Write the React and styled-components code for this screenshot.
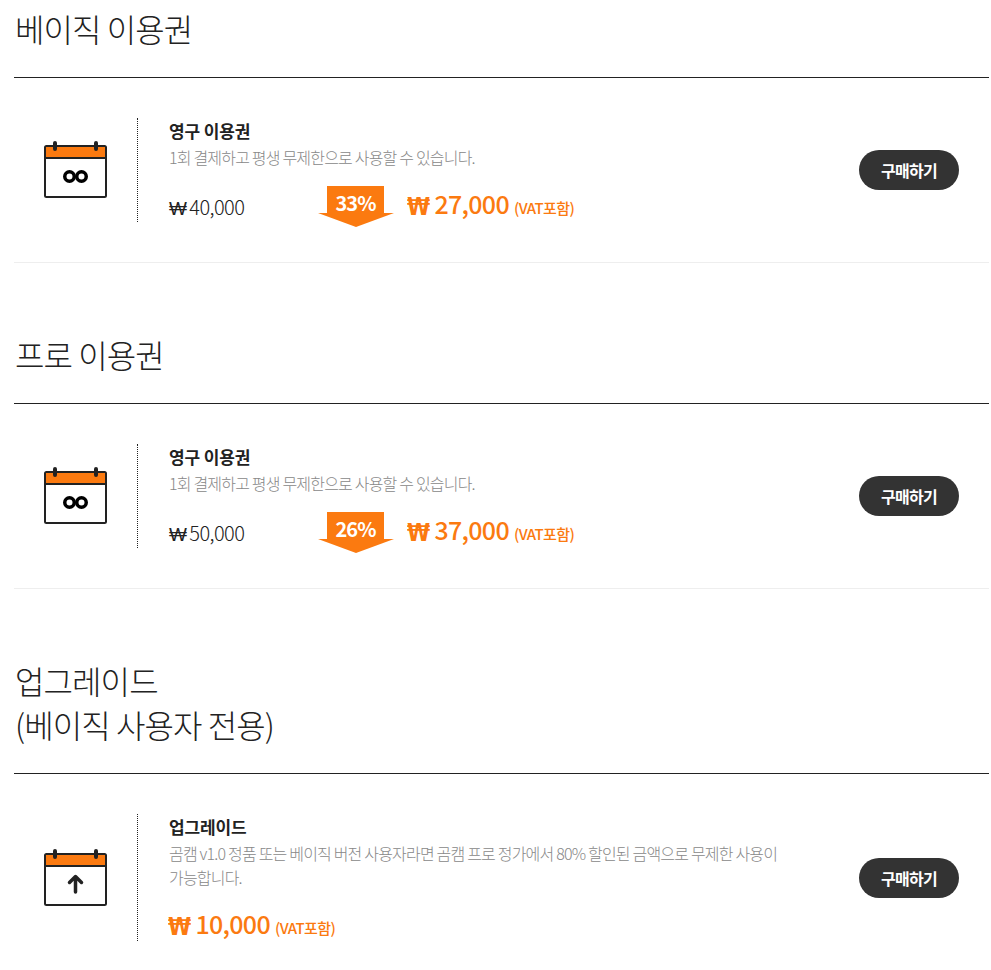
import styled, { createGlobalStyle } from "styled-components";

const ORANGE = "#fb7a10";
const DARK = "#222";

const GlobalStyle = createGlobalStyle`
  html, body {
    margin: 0;
    padding: 0;
    background: #fff;
    font-family: "Noto Sans CJK KR", "Noto Sans", sans-serif;
  }
`;

const Page = styled.div`
  width: 975px;
  margin-left: 14px;
  padding-bottom: 16px;
`;

const Section = styled.section`
  & + & {
    margin-top: 63px;
  }
`;

const Title = styled.h2`
  margin: 0;
  padding: 6px 0 27px 1px;
  border-bottom: 1px solid ${DARK};
  font-size: 32px;
  font-weight: 300;
  line-height: 44px;
  letter-spacing: -0.9px;
  color: #222;
`;

const Row = styled.div`
  display: flex;
  align-items: center;
  padding: 40px 30px 40px 0;
  border-bottom: ${(p) => (p.$last ? "none" : "1px solid #eee")};
`;

const IconCell = styled.div`
  width: 124px;
  align-self: stretch;
  flex: none;
  display: flex;
  align-items: center;
  justify-content: center;
  border-right: 1px dotted #222;
  box-sizing: border-box;
`;

const Info = styled.div`
  flex: 1;
  padding-left: 31px;
  min-width: 0;
`;

const Name = styled.div`
  font-size: 17px;
  font-weight: 700;
  line-height: 26px;
  letter-spacing: -0.15px;
  color: #222;
`;

const Desc = styled.p`
  margin: 1px 0 0;
  width: 620px;
  font-size: 16px;
  font-weight: 300;
  line-height: 24px;
  letter-spacing: -0.8px;
  color: #888;
`;

const PriceRow = styled.div`
  display: flex;
  align-items: center;
  box-sizing: border-box;
  height: ${(p) => (p.$short ? "39px" : "40px")};
  margin-top: 13px;
  padding-top: 2px;
`;

const OldPrice = styled.span`
  width: 150px;
  margin-top: 7px;
  font-size: 20px;
  font-weight: 300;
  letter-spacing: -0.6px;
  color: #222;
`;

const OldWon = styled.span`
  margin-right: 3px;
  font-family: "DejaVu Sans", sans-serif;
  font-size: 19px;
`;

const DiscountBadge = styled.div`
  position: relative;
  align-self: flex-start;
  width: 57px;
  height: 28px;
  margin: 2px 23px 0 8px;
  background: ${ORANGE};
  color: #fff;
  font-size: 20px;
  font-weight: 700;
  line-height: 34px;
  letter-spacing: -0.9px;
  text-align: center;

  &::after {
    content: "";
    position: absolute;
    top: 27px;
    left: -9.5px;
    border-style: solid;
    border-width: 14px 38px 0;
    border-color: ${ORANGE} transparent transparent;
  }
`;

const Price = styled.span`
  font-size: 25px;
  font-weight: 500;
  letter-spacing: -0.7px;
  color: ${ORANGE};
`;

const PriceWon = styled.span`
  display: inline-block;
  margin: 0 5px 0 ${(p) => (p.$flush ? "-1px" : "0")};
  font-family: "DejaVu Sans", sans-serif;
  font-size: 21px;
  font-weight: 700;
  transform: scaleY(1.2);
`;

const Vat = styled.span`
  margin-left: 5px;
  font-size: 15px;
  font-weight: 500;
  letter-spacing: -0.6px;
`;

const BuyButton = styled.button`
  flex: none;
  width: 100px;
  height: 40px;
  padding: 0;
  border: 0;
  border-radius: 20px;
  background: #333;
  color: #fff;
  font-family: inherit;
  font-size: 16px;
  font-weight: 700;
  letter-spacing: -0.7px;
`;

function CalendarIcon({ children }) {
  return (
    <svg width="64" height="58" viewBox="0 0 64 58" fill="none">
      <rect x="1" y="5" width="61" height="51" rx="1.5" fill="#fff" stroke="#222" strokeWidth="2" />
      <path d="M2 6h59v11H2z" fill={ORANGE} />
      <path d="M1 17h61" stroke="#222" strokeWidth="2" />
      <path d="M11 2v6M52 2v6" stroke="#222" strokeWidth="4" strokeLinecap="round" />
      {children}
    </svg>
  );
}

const InfinityMark = () => (
  <g stroke="#000" strokeWidth="3.5">
    <circle cx="25.500" cy="35.500" r="4.750" />
    <circle cx="37.500" cy="35.500" r="4.750" />
  </g>
);

const ArrowUp = () => (
  <path
    d="M31.500 43V28M25.500 33.500l6-6 6 6"
    stroke="#222"
    strokeWidth="3.500"
    strokeLinecap="round"
    strokeLinejoin="round"
  />
);

function Plan({ name, original, percent, price }) {
  return (
    <Row>
      <IconCell>
        <CalendarIcon>
          <InfinityMark />
        </CalendarIcon>
      </IconCell>
      <Info>
        <Name>{name}</Name>
        <Desc>1회 결제하고 평생 무제한으로 사용할 수 있습니다.</Desc>
        <PriceRow>
          <OldPrice>
            <OldWon>₩</OldWon>
            {original}
          </OldPrice>
          <DiscountBadge>{percent}</DiscountBadge>
          <Price>
            <PriceWon>₩</PriceWon>
            {price}
            <Vat>(VAT포함)</Vat>
          </Price>
        </PriceRow>
      </Info>
      <BuyButton>구매하기</BuyButton>
    </Row>
  );
}

export default function App() {
  return (
    <>
      <GlobalStyle />
      <Page>
        <Section>
          <Title>베이직 이용권</Title>
          <Plan name="영구 이용권" original="40,000" percent="33%" price="27,000" />
        </Section>
        <Section>
          <Title>프로 이용권</Title>
          <Plan name="영구 이용권" original="50,000" percent="26%" price="37,000" />
        </Section>
        <Section>
          <Title>
            업그레이드
            <br />
            (베이직 사용자 전용)
          </Title>
          <Row $last>
            <IconCell>
              <CalendarIcon>
                <ArrowUp />
              </CalendarIcon>
            </IconCell>
            <Info>
              <Name>업그레이드</Name>
              <Desc>
                곰캠 v1.0 정품 또는 베이직 버전 사용자라면 곰캠 프로 정가에서 80% 할인된 금액으로 무제한 사용이
                가능합니다.
              </Desc>
              <PriceRow $short>
                <Price>
                  <PriceWon $flush>₩</PriceWon>
                  10,000
                  <Vat>(VAT포함)</Vat>
                </Price>
              </PriceRow>
            </Info>
            <BuyButton>구매하기</BuyButton>
          </Row>
        </Section>
      </Page>
    </>
  );
}
